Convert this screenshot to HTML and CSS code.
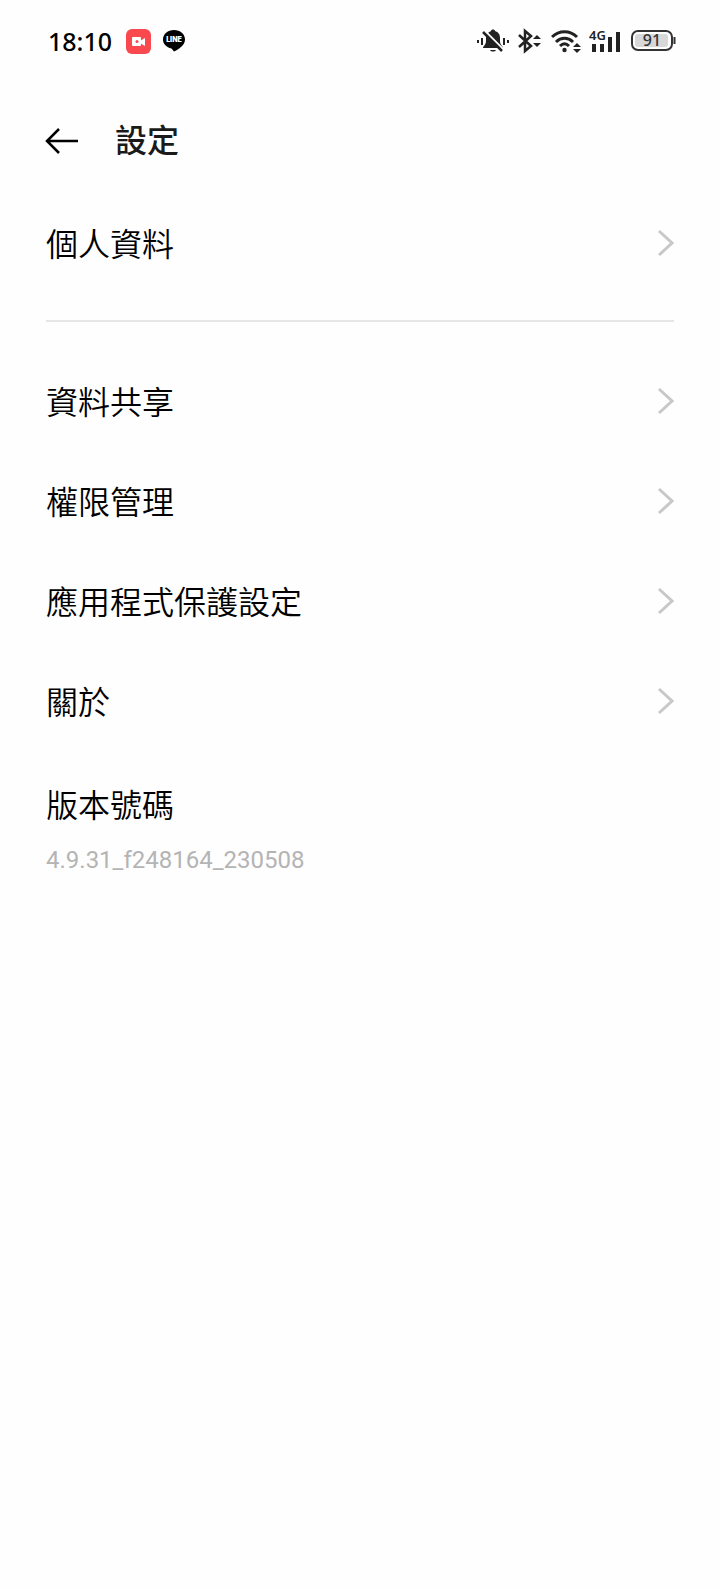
FILE: index.html
```html
<!DOCTYPE html>
<html lang="zh-Hant">
<head>
  <meta charset="UTF-8">
  <meta name="viewport" content="width=device-width, initial-scale=1.0">
  <title>設定</title>
  <link rel="stylesheet" href="styles.css">
</head>
<body>
  <div class="statusbar">
    <div class="status-left">
      <span class="clock">18:10</span>
      <svg class="rec" width="25" height="25" viewBox="0 0 25 25">
        <rect width="25" height="25" rx="6" fill="#f9494f"/>
        <rect x="6" y="8" width="9" height="9" rx="1" fill="#fff"/>
        <path d="M14 12l5-3v8l-5-3z" fill="#fff"/>
        <circle cx="11" cy="12.500" r="1.500" fill="#f9494f"/>
      </svg>
      <svg class="line" width="22" height="22" viewBox="0 0 22 22">
        <path d="M11 0C4.800 0 0 4 0 9.500c0 4.500 3.500 8 8.500 8.900l2.500 3.100c4-1.800 11-6 11-12C22 4 17.200 0 11 0z" fill="#000"/>
        <text x="11" y="12" text-anchor="middle">LINE</text>
      </svg>
    </div>
    <div class="status-right">
      <!-- muted bell -->
      <svg width="32" height="26" viewBox="0 0 32 26" fill="#222">
        <path d="M6 20c0-2 3-3 3-7V10c0-4 3-6 5-7 0-2 4-2 4 0 3 1 5 3 5 7v3c0 4 3 5 3 7zM13 22h6c-1 2-5 2-6 0z"/>
        <path d="M7 2l20 20" stroke="#fff" stroke-width="2"/>
        <path d="M6 4l19 19" stroke="#222" stroke-width="2.500"/>
        <path d="M1 12v3M5 10v7M27 10v7M31 12v3" stroke="#222" stroke-width="2"/>
      </svg>
      <!-- bluetooth -->
      <svg class="bt" width="24" height="26" viewBox="0 0 24 26">
        <path d="M2 7l12 11-6 5V3l6 5L2 19" fill="none" stroke="#222" stroke-width="2.500"/>
        <path d="M16 11l4-4 4 4zM16 15l4 4 4-4z" fill="#222"/>
      </svg>
      <!-- wifi -->
      <svg class="wifi" width="30" height="26" viewBox="0 0 30 26">
        <path d="M1 9c7-7 18-7 25 0M5 14c5-5 12-5 17 0M9 18c3-3 6-3 9 0" fill="none" stroke="#222" stroke-width="3"/>
        <circle cx="13.500" cy="22" r="2.200" fill="#222"/>
        <path d="M22 19l4-4 4 4zM22 21l4 4 4-4z" fill="#222"/>
      </svg>
      <!-- mobile signal -->
      <svg class="signal" width="32" height="26" viewBox="0 0 32 26">
        <path d="M3 16h4v8H3zM11 16h4v8h-4zM19 9h4v15h-4zM27 4h4v20h-4z" fill="#222"/>
        <text x="0" y="12">4G</text>
      </svg>
      <!-- battery -->
      <svg class="battery" width="45" height="24" viewBox="0 0 45 24">
        <rect x="1" y="2" width="40" height="19" rx="6" fill="#fff" stroke="#333" stroke-width="2"/>
        <rect x="4" y="5" width="33" height="13" rx="3" fill="#d8d8d8"/>
        <path d="M43.500 8v7" stroke="#333" stroke-width="2"/>
        <text x="21" y="17" text-anchor="middle">91</text>
      </svg>
    </div>
  </div>

  <header class="topbar">
    <button class="back" aria-label="返回">
      <svg width="34" height="26" viewBox="0 0 34 26">
        <path d="M14 1L2 13l12 12M2 13h31" fill="none" stroke="#000" stroke-width="2.500"/>
      </svg>
    </button>
    <h1>設定</h1>
  </header>

  <main>
    <nav class="group profile">
      <a class="row" href="#profile">個人資料
        <svg width="18" height="28" viewBox="0 0 18 28"><path d="M3 2l13 12L3 26"/></svg>
      </a>
    </nav>
    <hr>
    <nav class="group">
      <a class="row" href="#share">資料共享
        <svg width="18" height="28" viewBox="0 0 18 28"><path d="M3 2l13 12L3 26"/></svg>
      </a>
      <a class="row" href="#permission">權限管理
        <svg width="18" height="28" viewBox="0 0 18 28"><path d="M3 2l13 12L3 26"/></svg>
      </a>
      <a class="row" href="#protect">應用程式保護設定
        <svg width="18" height="28" viewBox="0 0 18 28"><path d="M3 2l13 12L3 26"/></svg>
      </a>
      <a class="row" href="#about">關於
        <svg width="18" height="28" viewBox="0 0 18 28"><path d="M3 2l13 12L3 26"/></svg>
      </a>
    </nav>
    <div class="version">
      <div>版本號碼</div>
      <p>4.9.31_f248164_230508</p>
    </div>
  </main>
</body>
</html>
```
FILE: styles.css
```css
* { box-sizing: border-box; }
body { margin: 0; background: #fefefe; color: #000; font-family: Roboto, "Noto Sans CJK TC", sans-serif; font-size: 32px; }
svg { display: block; flex: none; }

.statusbar { display: flex; justify-content: space-between; align-items: center; height: 82px; padding: 0 44px 0 48px; }
.status-left, .status-right { display: flex; align-items: center; }
.clock { font-family: "Noto Sans", sans-serif; font-size: 25px; font-weight: 500; line-height: 32px; }
.rec { margin-left: 14px; }
.line { margin-left: 12px; }
.line text { font: 900 7px Inter, sans-serif; fill: #fff; }
.bt { margin-left: 8px; }
.wifi { margin-left: 10px; }
.signal { margin-left: 8px; overflow: visible; }
.signal text { font: 600 13px "Noto Sans", sans-serif; fill: #222; stroke: #fefefe; stroke-width: 2px; paint-order: stroke; }
.battery { margin-left: 10px; }
.battery text { font: 500 16px "Noto Sans", sans-serif; fill: #333; }

.topbar { display: flex; align-items: center; height: 116px; padding: 2px 45px 0; }
.back { padding: 0; border: none; background: none; cursor: pointer; }
.topbar h1 { margin: 0 0 0 36px; color: #1a1a1a; font-size: 32px; font-weight: 500; line-height: 48px; }

main { padding: 0 46px; font-weight: 350; }
.row { display: flex; justify-content: space-between; align-items: center; height: 100px; color: inherit; line-height: 48px; text-decoration: none; }
.profile .row { height: 94px; }
.row svg { margin-bottom: 4px; }
.row path { fill: none; stroke: #c8c8c8; stroke-width: 3px; }
hr { height: 2px; margin: 28px 0 31px; border: none; background: #e6e6e6; }
.version { padding-top: 29px; line-height: 48px; }
.version p { margin: 14px 0 0; color: #b4b4b4; font-size: 24px; font-weight: 400; line-height: 32px; }
```
